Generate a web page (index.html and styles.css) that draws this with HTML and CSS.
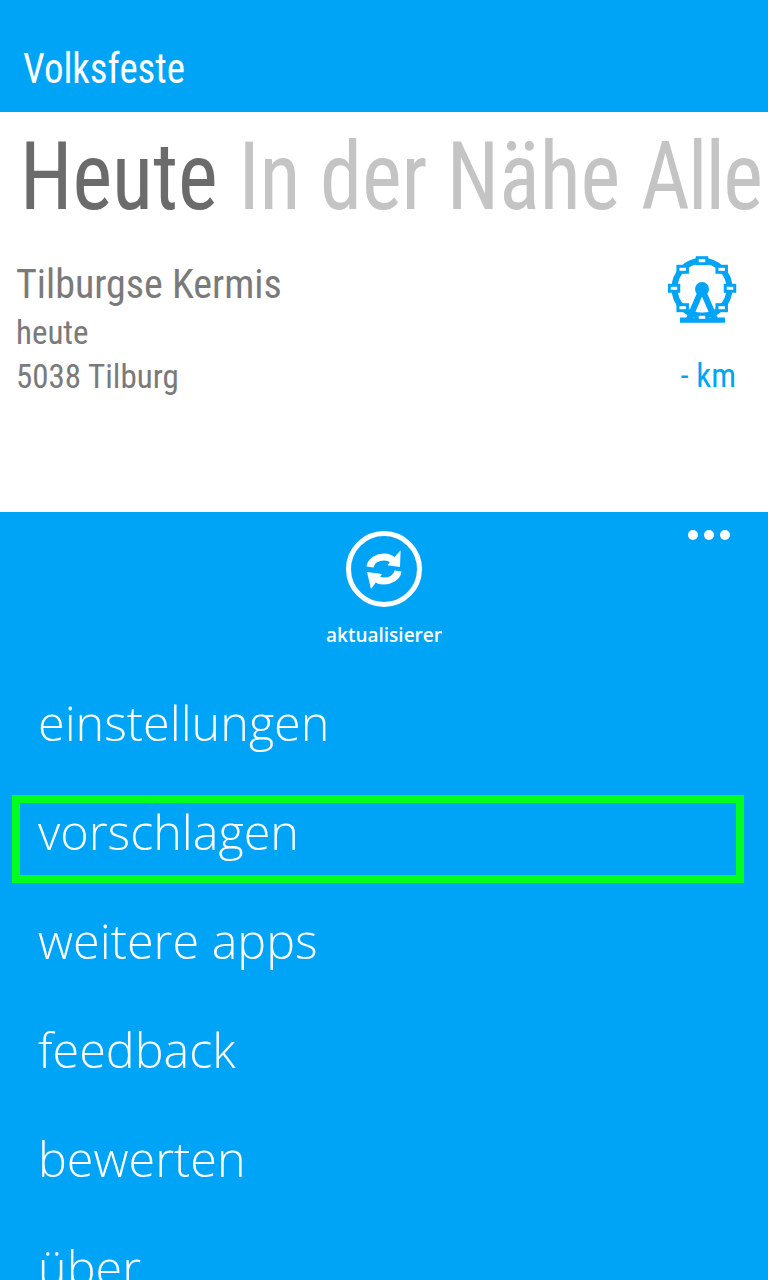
FILE: index.html
```html
<!DOCTYPE html>
<html lang="de">
<head>
    <meta charset="UTF-8">
    <meta name="viewport" content="width=device-width, initial-scale=1.0">
    <title>Volksfeste</title>
    <link rel="stylesheet" href="styles.css">
</head>
<body>
    <header class="title-bar">
        <h1 class="app-title">Volksfeste</h1>
    </header>

    <main class="content">
        <nav class="pivot">
            <span class="pivot-item active">Heute</span>
            <span class="pivot-item">In der Nähe</span>
            <span class="pivot-item tight">Alle</span>
        </nav>

        <div class="event">
            <div class="event-info">
                <div class="event-name">Tilburgse Kermis</div>
                <div class="event-line">heute</div>
                <div class="event-line">5038 Tilburg</div>
            </div>
            <div class="event-side">
                <svg class="wheel" width="70" height="70" viewBox="0 0 70 70">
                    <circle cx="34" cy="34.300" r="27.500" fill="none" stroke="#00a4f7" stroke-width="6"/>
                    <path d="M34 35 L21 65 M34 35 L47 65" stroke="#00a4f7" stroke-width="6" fill="none"/>
                    <circle cx="34" cy="35" r="7" fill="#00a4f7"/>
                    <path d="M12 63.500 H57 V68.700 H12 Z" fill="#00a4f7"/>
                    <g fill="#fff" stroke="#00a4f7" stroke-width="3">
                        <rect x="29.250" y="3.700" width="9.500" height="6"/>
                        <rect x="9.950" y="12.300" width="9.500" height="6"/>
                        <rect x="48.950" y="12.300" width="9.500" height="6"/>
                        <rect x="1.250" y="31.300" width="9.500" height="6"/>
                        <rect x="57.250" y="31.300" width="9.500" height="6"/>
                        <rect x="9.950" y="50.700" width="9.500" height="6"/>
                        <rect x="48.950" y="50.700" width="9.500" height="6"/>
                        <rect x="29.250" y="60.300" width="9.500" height="6"/>
                    </g>
                </svg>
                <div class="distance">- km</div>
            </div>
        </div>
    </main>

    <section class="app-bar">
        <div class="more"><i></i><i></i><i></i></div>
        <div class="action">
            <div class="action-circle">
                <svg class="refresh" width="40" height="40" viewBox="0 0 40 40">
                    <path d="M6 18 C7 11 14 8 20 8 C24 8 27 9 29 12" fill="none" stroke="#fff" stroke-width="7"/>
                    <path d="M36.600 1.300 L36 18 L23.300 16.300 Z" fill="#fff"/>
                    <path d="M34 22 C33 29 26 32 20 32 C16 32 13 31 11 28" fill="none" stroke="#fff" stroke-width="7"/>
                    <path d="M3 23 L18 25 L7 40 Z" fill="#fff"/>
                </svg>
            </div>
            <div class="action-label">aktualisieren</div>
        </div>

        <ul class="menu">
            <li class="menu-item">einstellungen</li>
            <li class="menu-item selected">vorschlagen</li>
            <li class="menu-item">weitere apps</li>
            <li class="menu-item">feedback</li>
            <li class="menu-item">bewerten</li>
            <li class="menu-item">über</li>
        </ul>
    </section>
</body>
</html>
```

FILE: styles.css
```css
html, body {
    margin: 0;
    padding: 0;
    height: 1280px;
    overflow: hidden;
    background-color: #fff;
}

body {
    display: flex;
    flex-direction: column;
}

/* title */
.title-bar {
    height: 112px;
    background-color: #00a4f7;
    padding: 45px 0 0 23px;
    box-sizing: border-box;
}

.app-title {
    margin: 0;
    color: #fff;
    font-family: "Liberation Sans Narrow", "Roboto Condensed", Roboto, sans-serif;
    font-size: 42px;
    line-height: 48px;
    font-weight: normal;
    transform: scaleX(.925);
    transform-origin: left;
}

/* pivot + list */
.content {
    height: 400px;
    overflow: hidden;
    font-family: "Liberation Sans Narrow", "Roboto Condensed", Roboto, sans-serif;
}

.pivot {
    display: flex;
    gap: 23px;
    margin: 0 0 0 20px;
    padding-top: 11px;
    padding-bottom: 1px;
    white-space: nowrap;
    transform: scaleX(.9);
    transform-origin: left;
}

.pivot-item {
    font-size: 94px;
    line-height: 108px;
    color: #c4c4c4;
}

.pivot-item.active {
    color: #6b6b6b;
}

.pivot-item.tight {
    letter-spacing: -2px;
}

.event {
    display: flex;
    justify-content: space-between;
    padding: 27px 32px 0 16px;
}

.event-name {
    font-size: 40px;
    line-height: 52px;
    color: #7a7a7a;
}

.event-line {
    font-size: 33px;
    line-height: 44px;
    color: #7a7a7a;
}

.event-side {
    display: flex;
    flex-direction: column;
    align-items: flex-end;
    margin-top: -5px;
}

.wheel {
    margin-right: -2px;
}

.distance {
    margin-top: 30px;
    font-size: 33px;
    line-height: 44px;
    color: #00a4f7;
}

/* bottom app bar */
.app-bar {
    position: relative;
    flex: 1;
    background-color: #00a4f7;
    color: #fff;
    font-family: "Open Sans", sans-serif;
    overflow: hidden;
}

.more {
    position: absolute;
    top: 18px;
    right: 38px;
    display: flex;
    gap: 6px;
}

.more i {
    width: 10px;
    height: 10px;
    border-radius: 50%;
    background-color: #fff;
}

.action {
    display: flex;
    flex-direction: column;
    align-items: center;
    padding-top: 19px;
}

.action-circle {
    width: 76px;
    height: 76px;
    border: 5px solid #fff;
    border-radius: 50%;
    box-sizing: border-box;
    display: flex;
    align-items: center;
    justify-content: center;
}

.action-label {
    width: 116px;
    margin-top: 16px;
    overflow: hidden;
    white-space: nowrap;
    font-size: 19px;
    line-height: 24px;
    font-weight: 600;
}

.menu {
    list-style: none;
    margin: 39px 0 0;
    padding: 0 24px 0 12px;
}

.menu-item {
    height: 88px;
    margin-bottom: 21px;
    padding-left: 18px;
    box-sizing: border-box;
    font-size: 48.500px;
    font-weight: 300;
    line-height: 56px;
    border: 8px solid transparent;
}

.menu-item.selected {
    border-color: #00ff1e;
}
```
